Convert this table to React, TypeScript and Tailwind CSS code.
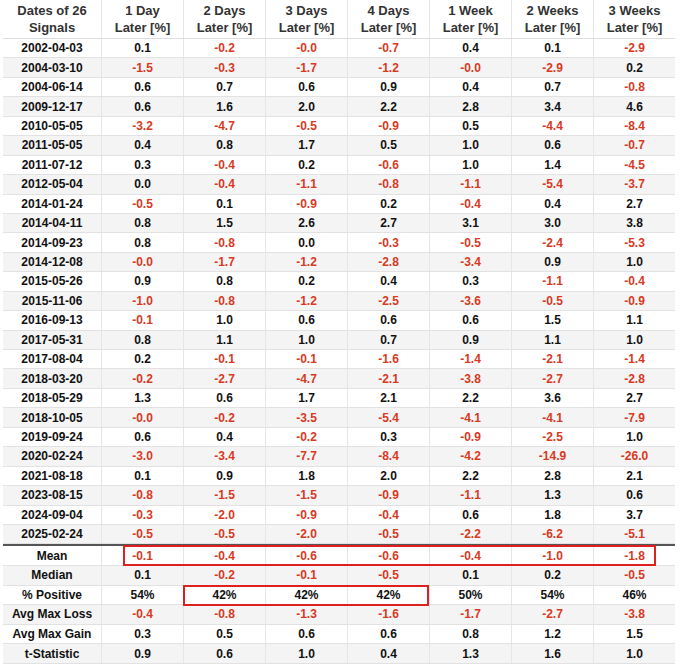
const headers = [
  ['Dates of 26', 'Signals'],
  ['1 Day', 'Later [%]'],
  ['2 Days', 'Later [%]'],
  ['3 Days', 'Later [%]'],
  ['4 Days', 'Later [%]'],
  ['1 Week', 'Later [%]'],
  ['2 Weeks', 'Later [%]'],
  ['3 Weeks', 'Later [%]'],
]

const rows: [string, string[]][] = [
  ['2002-04-03', ['0.1', '-0.2', '-0.0', '-0.7', '0.4', '0.1', '-2.9']],
  ['2004-03-10', ['-1.5', '-0.3', '-1.7', '-1.2', '-0.0', '-2.9', '0.2']],
  ['2004-06-14', ['0.6', '0.7', '0.6', '0.9', '0.4', '0.7', '-0.8']],
  ['2009-12-17', ['0.6', '1.6', '2.0', '2.2', '2.8', '3.4', '4.6']],
  ['2010-05-05', ['-3.2', '-4.7', '-0.5', '-0.9', '0.5', '-4.4', '-8.4']],
  ['2011-05-05', ['0.4', '0.8', '1.7', '0.5', '1.0', '0.6', '-0.7']],
  ['2011-07-12', ['0.3', '-0.4', '0.2', '-0.6', '1.0', '1.4', '-4.5']],
  ['2012-05-04', ['0.0', '-0.4', '-1.1', '-0.8', '-1.1', '-5.4', '-3.7']],
  ['2014-01-24', ['-0.5', '0.1', '-0.9', '0.2', '-0.4', '0.4', '2.7']],
  ['2014-04-11', ['0.8', '1.5', '2.6', '2.7', '3.1', '3.0', '3.8']],
  ['2014-09-23', ['0.8', '-0.8', '0.0', '-0.3', '-0.5', '-2.4', '-5.3']],
  ['2014-12-08', ['-0.0', '-1.7', '-1.2', '-2.8', '-3.4', '0.9', '1.0']],
  ['2015-05-26', ['0.9', '0.8', '0.2', '0.4', '0.3', '-1.1', '-0.4']],
  ['2015-11-06', ['-1.0', '-0.8', '-1.2', '-2.5', '-3.6', '-0.5', '-0.9']],
  ['2016-09-13', ['-0.1', '1.0', '0.6', '0.6', '0.6', '1.5', '1.1']],
  ['2017-05-31', ['0.8', '1.1', '1.0', '0.7', '0.9', '1.1', '1.0']],
  ['2017-08-04', ['0.2', '-0.1', '-0.1', '-1.6', '-1.4', '-2.1', '-1.4']],
  ['2018-03-20', ['-0.2', '-2.7', '-4.7', '-2.1', '-3.8', '-2.7', '-2.8']],
  ['2018-05-29', ['1.3', '0.6', '1.7', '2.1', '2.2', '3.6', '2.7']],
  ['2018-10-05', ['-0.0', '-0.2', '-3.5', '-5.4', '-4.1', '-4.1', '-7.9']],
  ['2019-09-24', ['0.6', '0.4', '-0.2', '0.3', '-0.9', '-2.5', '1.0']],
  ['2020-02-24', ['-3.0', '-3.4', '-7.7', '-8.4', '-4.2', '-14.9', '-26.0']],
  ['2021-08-18', ['0.1', '0.9', '1.8', '2.0', '2.2', '2.8', '2.1']],
  ['2023-08-15', ['-0.8', '-1.5', '-1.5', '-0.9', '-1.1', '1.3', '0.6']],
  ['2024-09-04', ['-0.3', '-2.0', '-0.9', '-0.4', '0.6', '1.8', '3.7']],
  ['2025-02-24', ['-0.5', '-0.5', '-2.0', '-0.5', '-2.2', '-6.2', '-5.1']],
]

const stats: [string, string[]][] = [
  ['Mean', ['-0.1', '-0.4', '-0.6', '-0.6', '-0.4', '-1.0', '-1.8']],
  ['Median', ['0.1', '-0.2', '-0.1', '-0.5', '0.1', '0.2', '-0.5']],
  ['% Positive', ['54%', '42%', '42%', '42%', '50%', '54%', '46%']],
  ['Avg Max Loss', ['-0.4', '-0.8', '-1.3', '-1.6', '-1.7', '-2.7', '-3.8']],
  ['Avg Max Gain', ['0.3', '0.5', '0.6', '0.6', '0.8', '1.2', '1.5']],
  ['t-Statistic', ['0.9', '0.6', '1.0', '0.4', '1.3', '1.6', '1.0']],
]

const cols = 'grid grid-cols-[98px_repeat(7,82px)]'

function Row({ label, vals, shade, h }: { label: string; vals: string[]; shade: boolean; h: string }) {
  return (
    <div className={`${cols} ${h} border-b border-[#e2e2e2] ${shade ? 'bg-[#f4f4f4]' : 'bg-white'}`}>
      <div className="flex items-center justify-center text-[#111]">{label}</div>
      {vals.map((v, i) => (
        <div
          key={i}
          className={`flex items-center justify-center border-l border-[#e6e6e6] ${v.startsWith('-') ? 'text-[#d8391f]' : 'text-[#111]'}`}
        >
          {v}
        </div>
      ))}
    </div>
  )
}

export default function App() {
  return (
    <div className="w-[680px] h-[668px] bg-white pl-[3px] font-['Liberation_Sans',Arial,sans-serif] text-[12px] font-bold">
      <div className="relative w-[672px]">
        <div className={`${cols} h-[39px] border-b border-[#dcdcdc] text-[13px] text-[#333] leading-[17px]`}>
          {headers.map((h, i) => (
            <div key={i} className={`flex flex-col items-center justify-center ${i > 0 ? 'border-l border-[#e6e6e6]' : ''}`}>
              <span>{h[0]}</span>
              <span>{h[1]}</span>
            </div>
          ))}
        </div>
        {rows.map(([d, v], i) => (
          <Row key={d} label={d} vals={v} shade={i % 2 === 1} h="h-[19.45px]" />
        ))}
        <div className="h-[2px] bg-[#555]" />
        {stats.map(([d, v], i) => (
          <Row key={d} label={d} vals={v} shade={i % 2 === 1} h="h-[19.6px]" />
        ))}
        <div className="absolute left-[120px] top-[545px] w-[533px] h-[21px] border-2 border-[#e0201f]" />
        <div className="absolute left-[180px] top-[585px] w-[246px] h-[21px] border-2 border-[#e0201f]" />
      </div>
    </div>
  )
}
